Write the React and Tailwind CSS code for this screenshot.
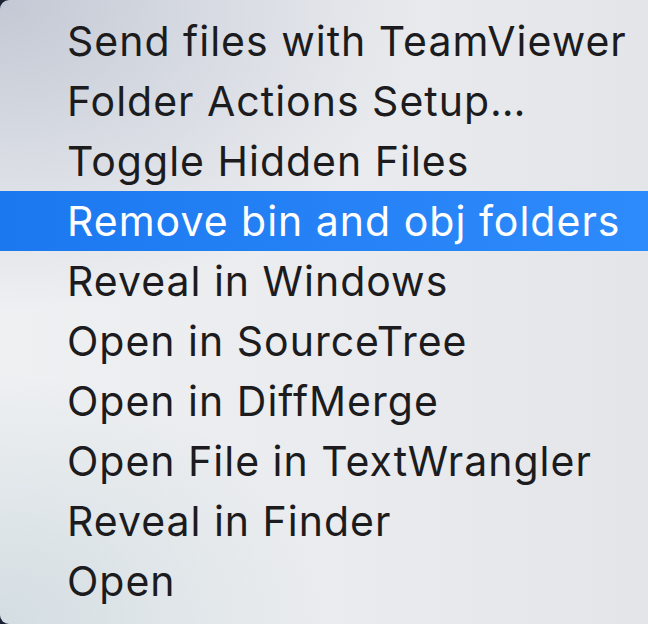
const items = [
  "Send files with TeamViewer",
  "Folder Actions Setup…",
  "Toggle Hidden Files",
  "Remove bin and obj folders",
  "Reveal in Windows",
  "Open in SourceTree",
  "Open in DiffMerge",
  "Open File in TextWrangler",
  "Reveal in Finder",
  "Open",
]

export default function App() {
  return (
    <div className="w-[648px] h-[624px] overflow-hidden bg-[#1b2333]">
      <div className="w-full h-full rounded-l-[9px] pt-[11px] pb-[13px] bg-[radial-gradient(ellipse_65%_50%_at_0%_0%,#c3c8d4,transparent),radial-gradient(ellipse_50%_40%_at_0%_100%,#d3dde2,transparent),linear-gradient(90deg,#eef0f2_0%,#e9ebee_55%,#e3e5e9_100%)]"
        style={{ fontFamily: "Inter, 'Liberation Sans', sans-serif" }}>
        {items.map((label, i) => {
          const active = i === 3
          return (
            <div key={label}
              className={
                "h-[60px] flex items-center pl-[67px] text-[41px] leading-none tracking-[1px] whitespace-nowrap " +
                (active ? "bg-[linear-gradient(90deg,#1c78ef,#2e8bfc)] text-white" : "text-[#1c1c1e]")
              }>
              {label}
            </div>
          )
        })}
      </div>
    </div>
  )
}
